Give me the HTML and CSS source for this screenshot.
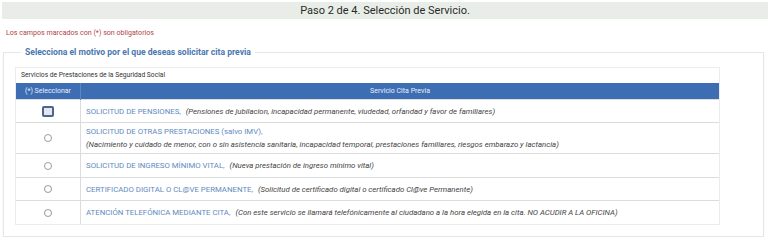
FILE: index.html
```html
<!DOCTYPE html>
<html lang="es">
<head>
<meta charset="utf-8">
<title>Paso 2 de 4</title>
<link rel="stylesheet" href="styles.css">
</head>
<body>
<div class="topbar">Paso 2 de 4. Selección de Servicio.</div>
<p class="notice">Los campos marcados con (*) son obligatorios</p>
<fieldset class="box">
  <legend class="legend">Selecciona el motivo por el que deseas solicitar cita previa</legend>
  <div class="panel">
    <div class="caption">Servicios de Prestaciones de la Seguridad Social</div>
    <table class="grid">
      <thead>
        <tr><th class="sel">(*) Seleccionar</th><th class="svc">Servicio Cita Previa</th></tr>
      </thead>
      <tbody>
        <tr class="r1"><td class="sel"><span class="radio focused"></span></td><td class="svc"><span class="title">SOLICITUD DE PENSIONES,</span> <em class="desc">(Pensiones de jubilacion, incapacidad permanente, viudedad, orfandad y favor de familiares)</em></td></tr>
        <tr class="r2"><td class="sel"><span class="radio"></span></td><td class="svc"><span class="title">SOLICITUD DE OTRAS PRESTACIONES (salvo IMV),</span><br><em class="desc">(Nacimiento y cuidado de menor, con o sin asistencia sanitaria, incapacidad temporal, prestaciones familiares, riesgos embarazo y lactancia)</em></td></tr>
        <tr class="r3"><td class="sel"><span class="radio"></span></td><td class="svc"><span class="title">SOLICITUD DE INGRESO MÍNIMO VITAL,</span> <em class="desc">(Nueva prestación de ingreso mínimo vital)</em></td></tr>
        <tr class="r4"><td class="sel"><span class="radio"></span></td><td class="svc"><span class="title">CERTIFICADO DIGITAL O CL@VE PERMANENTE,</span> <em class="desc">(Solicitud de certificado digital o certificado Cl@ve Permanente)</em></td></tr>
        <tr class="r5"><td class="sel"><span class="radio"></span></td><td class="svc"><span class="title">ATENCIÓN TELEFÓNICA MEDIANTE CITA,</span> <em class="desc">(Con este servicio se llamará telefónicamente al ciudadano a la hora elegida en la cita. NO ACUDIR A LA OFICINA)</em></td></tr>
      </tbody>
    </table>
  </div>
</fieldset>
</body>
</html>
```
FILE: styles.css
```css
html, body {
  margin: 0;
  padding: 0;
  background: #ffffff;
  font-family: Roboto, "Liberation Sans", Arial, sans-serif;
}
.topbar {
  margin: 2px 0 0 2px;
  height: 17px;
  line-height: 17px;
  background: #e8eee7;
  color: #2a2a2a;
  font-size: 11px;
  text-align: center;
}
.notice {
  margin: 9px 0 0 6px;
  font-size: 7.1px;
  line-height: 9px;
  color: #b04545;
}
.box {
  margin: 10px 4px 0 3px;
  padding: 10px 11px 11px 11px;
  border: 1px solid #e6e6e6;
  box-shadow: 0 1px 2px rgba(0,0,0,0.05);
}
.legend {
  margin-left: 6px;
  padding: 0 4px;
  font-size: 8.6px;
  font-weight: bold;
  color: #4a78b0;
}
.panel {
  width: 703px;
  border: 1px solid #ececec;
}
.caption {
  height: 15px;
  line-height: 15px;
  padding-left: 5px;
  font-size: 6.7px;
  color: #333;
}
.grid {
  width: 100%;
  border-collapse: collapse;
  font-size: 7.8px;
}
.grid th {
  height: 16px;
  padding: 0;
  background: #3d6eb4;
  color: #e8eef8;
  font-weight: normal;
  font-size: 7px;
}
.grid th.sel {
  width: 64px;
  border-right: 1px solid #5c86c2;
}
.grid td {
  border-top: 1px solid #dcdcdc;
  padding: 0;
  vertical-align: middle;
}
.grid td.sel {
  text-align: center;
  border-right: 1px solid #dcdcdc;
}
.grid td.svc {
  padding-left: 5px;
  line-height: 13px;
}
.r1 td { height: 22px; }
.r2 td { height: 30px; }
.r3 td { height: 23px; }
.r4 td { height: 22px; }
.r5 td { height: 23px; }
.title {
  color: #5f8ac0;
  margin-right: 3px;
}
.desc {
  color: #444;
}
.radio {
  display: inline-block;
  width: 6px;
  height: 6px;
  border: 1px solid #9a9a9a;
  border-radius: 50%;
  background: #fff;
  vertical-align: middle;
}
.radio.focused {
  width: 8px;
  height: 7px;
  border: 2px solid #4a6590;
  border-radius: 2px;
  background: #e4e6ea;
}
```
